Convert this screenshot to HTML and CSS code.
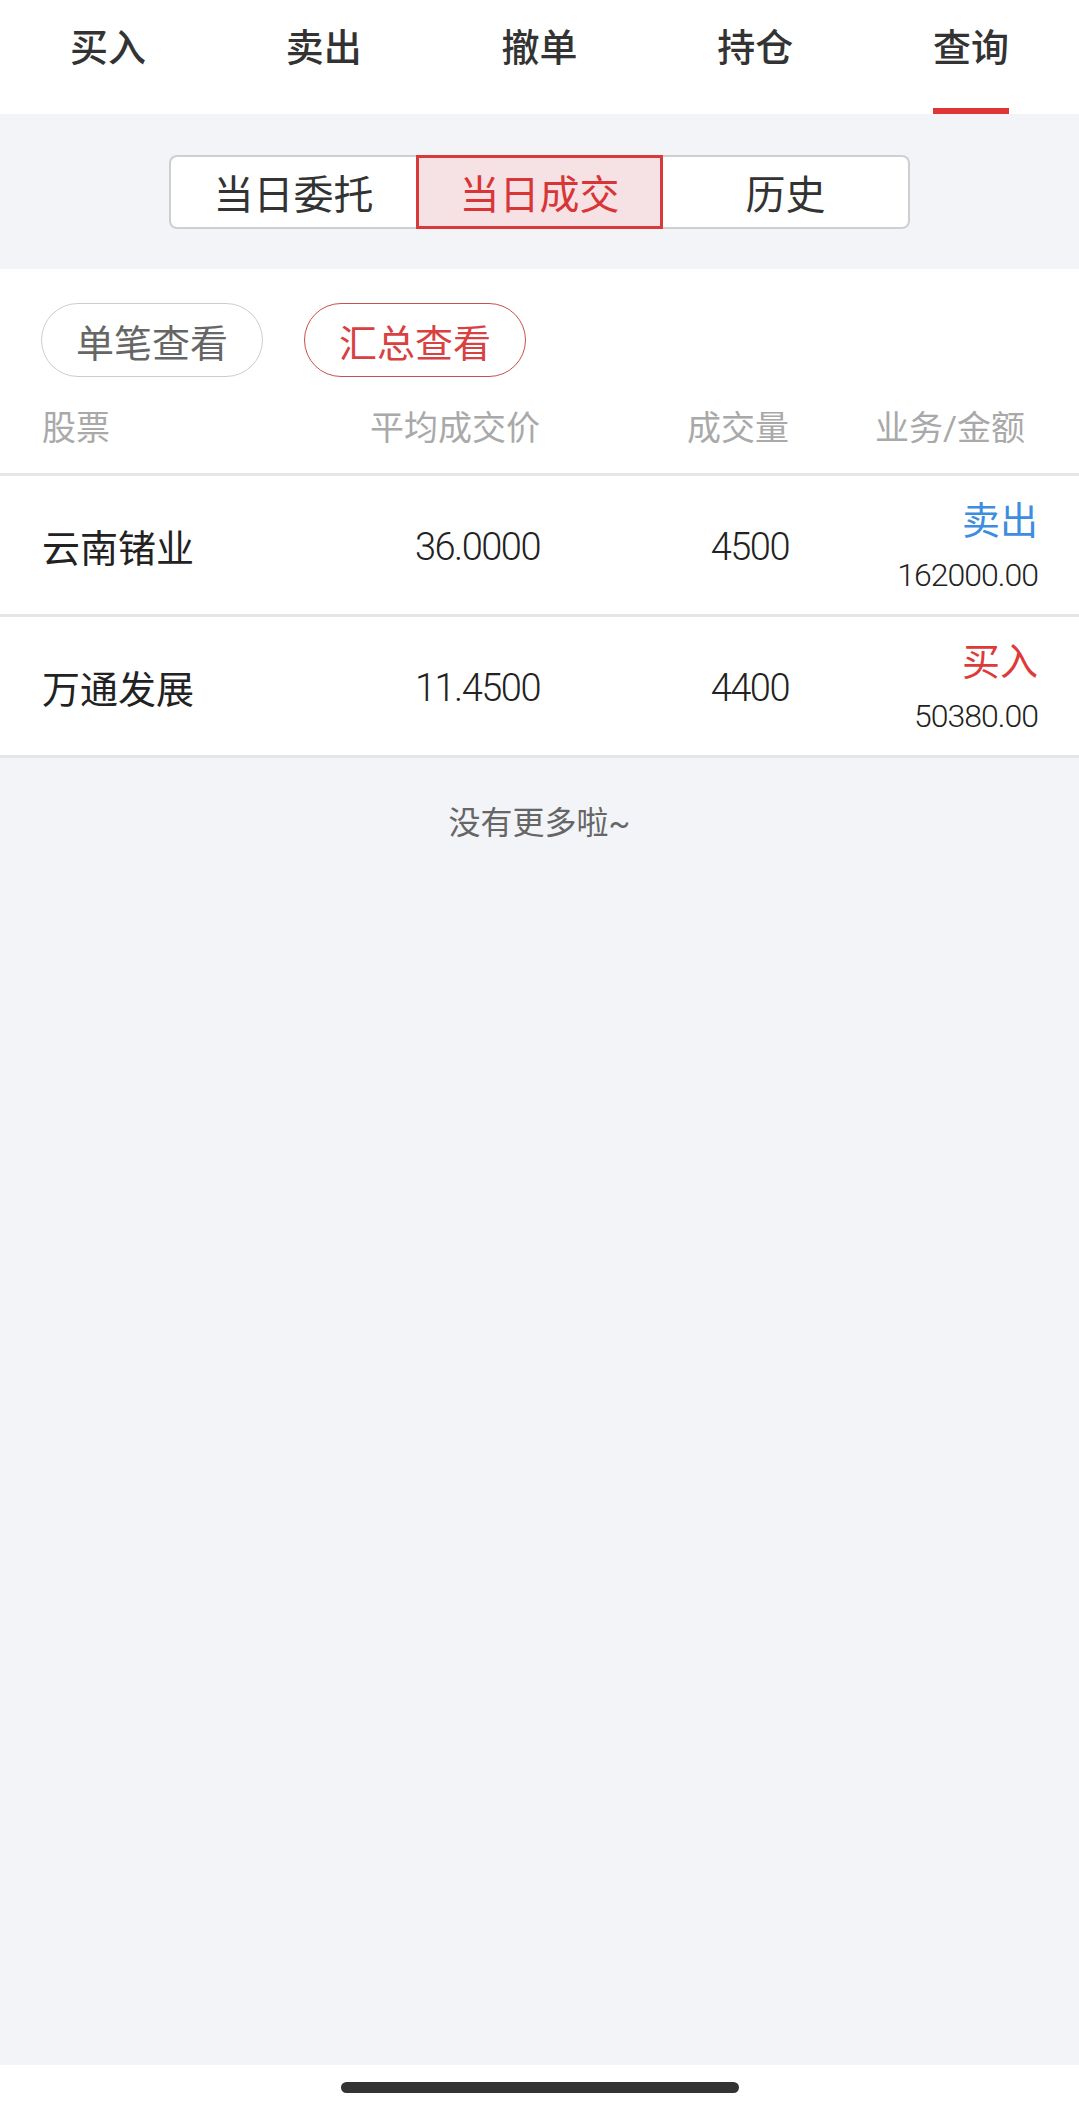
FILE: index.html
```html
<!DOCTYPE html>
<html lang="zh-CN">
  <head>
    <meta charset="UTF-8" />
    <title>查询 • 当日成交</title>
    <meta name="viewport" content="width=device-width, initial-scale=1.0" />
    <link rel="stylesheet" href="styles.css">
  </head>
  <body>
    <header class="tabs">
      <a class="tab" href="#"><span>买入</span></a>
      <a class="tab" href="#"><span>卖出</span></a>
      <a class="tab" href="#"><span>撤单</span></a>
      <a class="tab" href="#"><span>持仓</span></a>
      <a class="tab active" href="#"><span>查询</span></a>
    </header>

    <div class="segment-bar">
      <div class="segments">
        <button class="seg first">当日委托</button>
        <button class="seg active">当日成交</button>
        <button class="seg last">历史</button>
      </div>
    </div>

    <section class="panel">
      <div class="pills">
        <button class="pill">单笔查看</button>
        <button class="pill active">汇总查看</button>
      </div>

      <div class="grid head">
        <div>股票</div>
        <div class="num">平均成交价</div>
        <div class="num">成交量</div>
        <div class="num last-head">业务/金额</div>
      </div>

      <div class="grid row">
        <div class="name">云南锗业</div>
        <div class="num val">36.0000</div>
        <div class="num val">4500</div>
        <div class="deal">
          <span class="side sell">卖出</span>
          <span class="amount">162000.00</span>
        </div>
      </div>

      <div class="grid row">
        <div class="name">万通发展</div>
        <div class="num val">11.4500</div>
        <div class="num val">4400</div>
        <div class="deal">
          <span class="side buy">买入</span>
          <span class="amount">50380.00</span>
        </div>
      </div>
    </section>

    <main class="rest">
      <p class="no-more">没有更多啦~</p>
    </main>

    <footer class="home-bar">
      <div class="indicator"></div>
    </footer>
  </body>
</html>
```

FILE: styles.css
```css
/* --- Reset & base styles --- */
*, *::before, *::after {
  box-sizing: border-box;
  margin: 0;
  padding: 0;
}
body {
  font-family: Roboto, "Noto Sans CJK SC", sans-serif;
  color: #222;
  background: #f3f4f8;
  min-height: 100vh;
  display: flex;
  flex-direction: column;
}
button {
  font: inherit;
  background: none;
  border: none;
  cursor: pointer;
}

/* --- Top tabs --- */
.tabs {
  display: flex;
  height: 114px;
  background: #fff;
}
.tab {
  flex: 1;
  display: flex;
  justify-content: center;
  text-decoration: none;
  color: #333;
  font-size: 38px;
  font-weight: 500;
}
.tab span {
  display: block;
  height: 114px;
  line-height: 96px;
}
.tab.active span {
  border-bottom: 6px solid #e03535;
}

/* --- Segmented control --- */
.segment-bar {
  height: 155px;
  display: flex;
  justify-content: center;
  padding-top: 41px;
}
.segments {
  display: flex;
  height: 74px;
}
.seg {
  width: 247px;
  height: 74px;
  font-size: 40px;
  color: #333;
  background: #fff;
  border: 2px solid #cfcfd2;
}
.seg.first {
  border-right: none;
  border-radius: 8px 0 0 8px;
}
.seg.last {
  border-left: none;
  border-radius: 0 8px 8px 0;
}
.seg.active {
  color: #d83636;
  background: #f6e1e5;
  border: 3px solid #d83a3a;
}

/* --- White panel --- */
.panel {
  background: #fff;
}
.pills {
  display: flex;
  gap: 41px;
  padding: 34px 0 0 41px;
}
.pill {
  height: 74px;
  padding: 0 34px;
  border: 1.5px solid #cdcdcd;
  border-radius: 37px;
  font-size: 38px;
  color: #666;
  font-family: "Noto Sans CJK SC", sans-serif;
}
.pill.active {
  border-color: #c9504f;
  color: #d94141;
}

/* --- Table --- */
.grid {
  display: grid;
  grid-template-columns: repeat(4, 1fr);
  align-items: center;
  padding: 0 41px 0 42px;
  border-bottom: 3px solid #e6e6ea;
}
.num {
  text-align: right;
}
.head {
  height: 99px;
  font-size: 34px;
  color: #a9a9a9;
}
.last-head {
  padding-right: 13px;
}
.row {
  height: 141px;
  font-size: 38px;
}
.name {
  color: #222;
}
.val {
  font-weight: 300;
  letter-spacing: -1.5px;
  padding-top: 4px;
}
.deal {
  display: flex;
  flex-direction: column;
  align-items: flex-end;
  padding-top: 6px;
}
.side {
  line-height: 54px;
  font-size: 38px;
}
.sell {
  color: #3d8ee0;
}
.buy {
  color: #dd3a3a;
}
.amount {
  line-height: 54px;
  font-size: 32px;
  font-weight: 300;
  letter-spacing: -1px;
}

/* --- Empty area & home bar --- */
.rest {
  flex: 1;
}
.no-more {
  padding-top: 45px;
  line-height: 40px;
  text-align: center;
  font-size: 32px;
  color: #666;
}
.home-bar {
  height: 44px;
  background: #fff;
  display: flex;
  justify-content: center;
  padding-top: 17px;
}
.indicator {
  width: 398px;
  height: 11px;
  border-radius: 6px;
  background: #333;
}
```
